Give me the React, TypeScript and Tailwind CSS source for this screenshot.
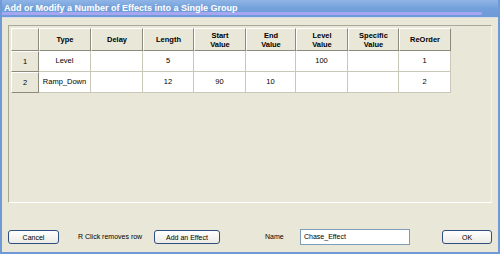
import React from "react";

const cols = [
  { label: ["Type"], w: 52 },
  { label: ["Delay"], w: 52 },
  { label: ["Length"], w: 51 },
  { label: ["Start", "Value"], w: 52 },
  { label: ["End", "Value"], w: 50 },
  { label: ["Level", "Value"], w: 52 },
  { label: ["Specific", "Value"], w: 51 },
  { label: ["ReOrder"], w: 52 },
];

const rows = [
  ["Level", "", "5", "", "", "100", "", "1"],
  ["Ramp_Down", "", "12", "90", "10", "", "", "2"],
];

const font = { fontFamily: '"Liberation Sans", Arial, sans-serif' };

const XpButton: React.FC<{ label: string; className?: string }> = ({ label, className }) => (
  <button
    className={`h-[14px] rounded-[3px] border border-[#2f4f82] bg-gradient-to-b from-white to-[#ecebe4] text-[7px] leading-none text-black ${className ?? ""}`}
  >
    {label}
  </button>
);

export default function App() {
  return (
    <div
      className="w-[500px] h-[254px] flex flex-col bg-[#6f9ad6] px-[2px] pb-[2px] overflow-hidden"
      style={font}
    >
      <div className="h-[17px] shrink-0 relative bg-gradient-to-b from-[#8fb4e6] via-[#72a0da] to-[#6e9bd7]">
        <div className="absolute left-0 right-[16px] top-[12px] h-[3px] rounded-r-full bg-[#a7a6f2]" />
        <div className="relative pl-[2px] pt-[2px] text-[9px] font-bold leading-[12px] text-white whitespace-nowrap">
          Add or Modify a Number of Effects into a Single Group
        </div>
      </div>
      <div className="flex-1 flex flex-col bg-[#e9e7d8] border-t border-[#d7dbe6] pt-[7px] px-[6px]">
        <div className="h-[178px] border-t border-l border-[#a9a797] border-b border-r border-b-white border-r-[#f4f3ec] p-[2px]">
          <div className="flex flex-col">
            <div className="flex h-[23px]">
              <div className="w-[28px] border-t border-l border-white border-r border-b border-r-[#8c8a7c] border-b-[#8c8a7c] bg-[#e9e7d8]" />
              {cols.map((c, i) => (
                <div
                  key={i}
                  style={{ width: c.w }}
                  className="flex flex-col items-center justify-center border-t border-l border-white border-r border-b border-r-[#8c8a7c] border-b-[#8c8a7c] bg-[#e9e7d8] text-[7.5px] font-bold leading-[9px] text-black"
                >
                  {c.label.map((l) => (
                    <span key={l}>{l}</span>
                  ))}
                </div>
              ))}
            </div>
            {rows.map((r, ri) => (
              <div key={ri} className="flex h-[21px]">
                <div className="w-[28px] flex items-center justify-center border-t border-l border-white border-r border-b border-r-[#8c8a7c] border-b-[#8c8a7c] bg-[#e9e7d8] text-[7.5px] text-black">
                  {ri + 1}
                </div>
                {r.map((v, ci) => (
                  <div
                    key={ci}
                    style={{ width: cols[ci].w }}
                    className="flex items-center justify-center bg-white border-r border-b border-[#c9c7b8] text-[7.5px] text-black"
                  >
                    {v}
                  </div>
                ))}
              </div>
            ))}
          </div>
        </div>
        <div className="flex items-center mt-[26px] h-[16px] text-[7px] text-black">
          <XpButton label="Cancel" className="w-[51px]" />
          <span className="ml-[19px] w-[76px]">R Click removes row</span>
          <XpButton label="Add an Effect" className="w-[66px]" />
          <span className="ml-[45px] w-[35px]">Name</span>
          <div className="w-[110px] h-[16px] border border-[#7f9db9] bg-white pl-[3px] flex items-center text-[7px] text-black">
            Chase_Effect
          </div>
          <XpButton label="OK" className="ml-[32px] w-[50px]" />
        </div>
      </div>
    </div>
  );
}
